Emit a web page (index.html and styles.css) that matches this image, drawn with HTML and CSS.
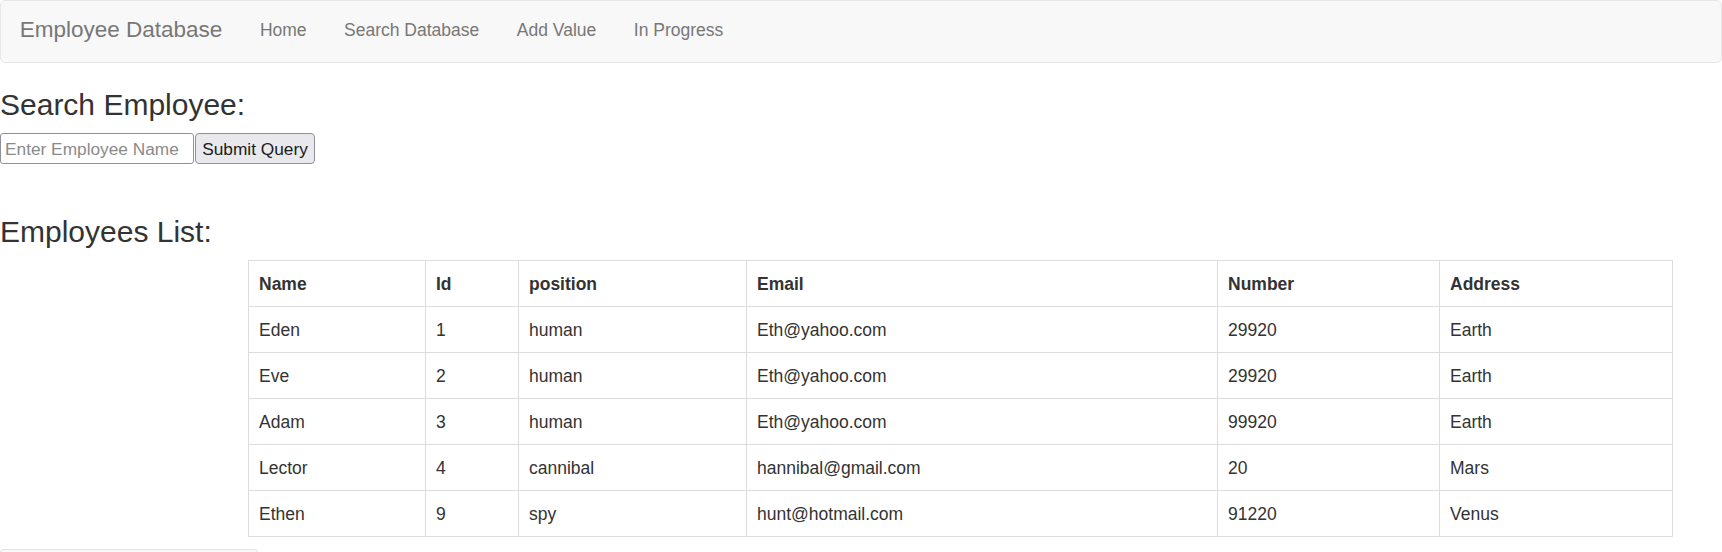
FILE: index.html
```html
<!DOCTYPE html>
<html>
<head>
<meta charset="utf-8">
<title>Employee Database</title>
<link rel="stylesheet" href="styles.css">
</head>
<body>
<nav class="navbar">
  <a class="brand" href="#">Employee Database</a>
  <ul class="nav">
    <li><a href="#">Home</a></li>
    <li><a href="#">Search Database</a></li>
    <li><a href="#">Add Value</a></li>
    <li><a href="#">In Progress</a></li>
  </ul>
</nav>

<h3 class="title title-search">Search Employee:</h3>
<form class="search">
  <input class="search-input" type="text" placeholder="Enter Employee Name"><button class="search-btn" type="button">Submit Query</button>
</form>

<h3 class="title title-list">Employees List:</h3>
<table class="emp-table">
  <colgroup>
    <col class="c-name"><col class="c-id"><col class="c-pos"><col class="c-email"><col class="c-num"><col class="c-addr">
  </colgroup>
  <thead>
    <tr><th>Name</th><th>Id</th><th>position</th><th>Email</th><th>Number</th><th>Address</th></tr>
  </thead>
  <tbody>
    <tr><td>Eden</td><td>1</td><td>human</td><td>Eth@yahoo.com</td><td>29920</td><td>Earth</td></tr>
    <tr><td>Eve</td><td>2</td><td>human</td><td>Eth@yahoo.com</td><td>29920</td><td>Earth</td></tr>
    <tr><td>Adam</td><td>3</td><td>human</td><td>Eth@yahoo.com</td><td>99920</td><td>Earth</td></tr>
    <tr><td>Lector</td><td>4</td><td>cannibal</td><td>hannibal@gmail.com</td><td>20</td><td>Mars</td></tr>
    <tr><td>Ethen</td><td>9</td><td>spy</td><td>hunt@hotmail.com</td><td>91220</td><td>Venus</td></tr>
  </tbody>
</table>
<div class="bottom-box"></div>
</body>
</html>
```
FILE: styles.css
```css
* { box-sizing: border-box; }
html, body { margin: 0; padding: 0; background: #fff; }
body {
  font-family: "Liberation Sans", Arial, sans-serif;
  font-size: 17.5px;
  line-height: 25px;
  color: #333;
  overflow: hidden;
}

.navbar {
  display: flex;
  align-items: flex-start;
  height: 63px;
  background: #f8f8f8;
  border: 1px solid #e7e7e7;
  border-radius: 5px;
}
.brand {
  font-size: 22.5px;
  line-height: 25px;
  padding: 16px 18.75px 0 18.75px;
  color: #777;
  text-decoration: none;
}
.nav {
  display: flex;
  list-style: none;
  margin: 0;
  padding: 0;
}
.nav a {
  display: block;
  padding: 17px 18.75px 0 18.75px;
  font-size: 17.5px;
  line-height: 25px;
  color: #777;
  text-decoration: none;
}

.title {
  font-size: 30px;
  line-height: 33px;
  font-weight: 400;
  margin: 0;
  color: #333;
}
.title-search { margin-top: 25px; }
.title-list { margin-top: 51px; }

.search {
  display: flex;
  margin-top: 12px;
}
.search-input {
  width: 194px;
  height: 31px;
  margin: 0;
  padding: 2px 4px 0 4px;
  font-family: "Liberation Sans", Arial, sans-serif;
  font-size: 17.3px;
  color: #333;
  background: #fff;
  border: 1px solid #8f8f9d;
  border-radius: 3px;
}
.search-input::placeholder { color: #8a8a8a; }
.search-btn {
  width: 120px;
  height: 31px;
  margin: 0 0 0 1px;
  padding: 2px 6px 0 6px;
  font-family: "Liberation Sans", Arial, sans-serif;
  font-size: 17.3px;
  color: #1b1b1b;
  background: #e9e9ed;
  border: 1px solid #8f8f9d;
  border-radius: 4px;
}

.emp-table {
  margin: 12px 0 0 248px;
  width: 1424px;
  table-layout: fixed;
  border-collapse: collapse;
  border-spacing: 0;
}
.c-name { width: 177px; }
.c-id { width: 93px; }
.c-pos { width: 228px; }
.c-email { width: 471px; }
.c-num { width: 222px; }
.c-addr { width: 233px; }
.emp-table th,
.emp-table td {
  border: 1px solid #ddd;
  padding: 11px 10px 9px 10px;
  text-align: left;
  vertical-align: top;
  line-height: 25px;
  font-size: 17.5px;
  color: #333;
}
.emp-table th { font-weight: 700; }

.bottom-box {
  margin-top: 12px;
  width: 258px;
  height: 40px;
  background: #f8f8f8;
  border: 1px solid #e3e3e3;
  border-radius: 3px;
}
```
